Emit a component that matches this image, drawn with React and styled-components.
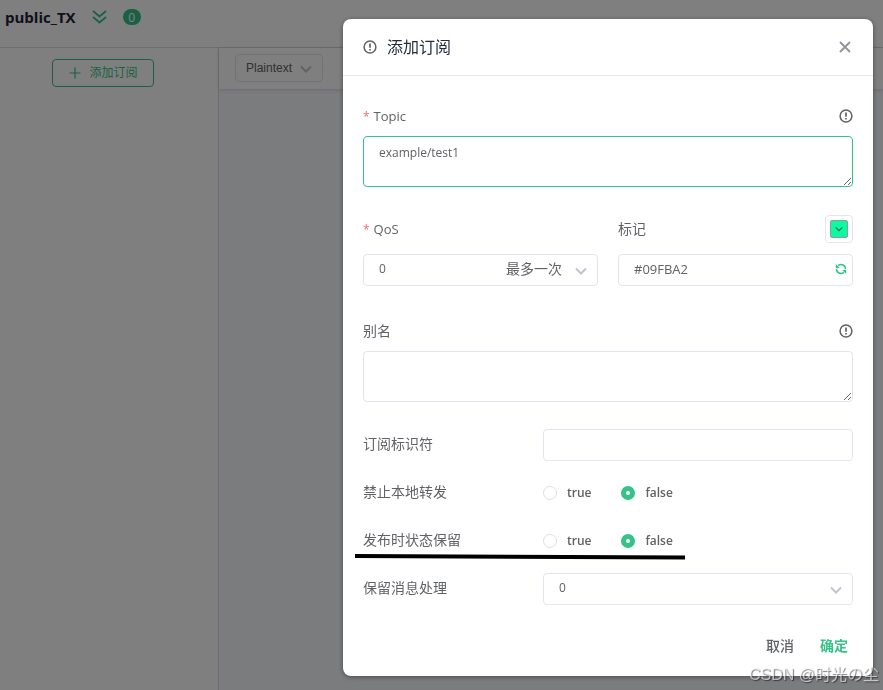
import React, { useState } from 'react'
import styled, { createGlobalStyle } from 'styled-components'

const green = '#34c388'
const border = '#e4e4ef'

const GlobalStyle = createGlobalStyle`
  *, *::before, *::after {
    box-sizing: border-box;
  }

  body {
    margin: 0;
    background: #fff;
    color: #606266;
    font: 13px/20px "Open Sans", "Noto Sans CJK SC", sans-serif;
  }

  button, input, select, textarea {
    font: inherit;
    color: inherit;
  }

  button {
    padding: 0;
    border: none;
    background: none;
    cursor: pointer;
  }
`

const Page = styled.div`
  display: flex;
  flex-direction: column;
  min-height: 100vh;
`

const TopBar = styled.header`
  display: flex;
  align-items: flex-start;
  height: 48px;
  padding: 7px 5px;
  border-bottom: 1px solid #dcdce2;
`

const ClientName = styled.h1`
  margin: 0 16px 0 0;
  color: #1d2236;
  font-size: 15px;
  font-weight: 700;
  line-height: 20px;
`

const Collapse = styled.button`
  display: flex;
  align-items: center;
  height: 20px;
  margin-right: 16px;
  color: ${green};
`

const Count = styled.span`
  min-width: 18px;
  height: 16px;
  margin-top: 2px;
  border-radius: 8px;
  background: ${green};
  color: #fff;
  font-size: 12px;
  line-height: 17px;
  text-align: center;
`

const Columns = styled.div`
  display: flex;
  flex: 1;
`

const Sidebar = styled.aside`
  display: flex;
  flex: 0 0 219px;
  align-items: flex-start;
  justify-content: center;
  padding: 11px 12px 0 0;
  border-right: 1px solid #dcdce2;
`

const NewSubscription = styled.button`
  display: flex;
  align-items: center;
  gap: 8px;
  height: 28px;
  padding: 0 15px 0 16px;
  border: 1px solid ${green};
  border-radius: 4px;
  color: ${green};
  font-size: 12px;
`

const Messages = styled.main`
  flex: 1;
  background: #f7f8fc;
`

const Toolbar = styled.div`
  height: 41px;
  padding: 6px 16px;
  background: #fff;
  box-shadow: 0 1px 4px rgba(0, 0, 0, 0.14);
`

const SelectBox = styled.div`
  position: relative;
  width: ${props => props.$width || '100%'};

  svg {
    position: absolute;
    top: 50%;
    right: 11px;
    margin-top: -5px;
    color: #c0c4cc;
    pointer-events: none;
  }
`

const FormatSelect = styled.select`
  display: block;
  width: 100%;
  height: 28px;
  padding: 0 10px;
  border: 1px solid ${border};
  border-radius: 4px;
  background: #fff;
  appearance: none;
  font: 12px/26px "Liberation Sans", Arial, sans-serif;
`

const Overlay = styled.div`
  position: fixed;
  inset: 0;
  display: flex;
  align-items: flex-start;
  justify-content: flex-end;
  padding: 19px 10px;
  overflow: auto;
  background: rgba(0, 0, 0, 0.5);
`

const Dialog = styled.form`
  width: 100%;
  max-width: 530px;
  border-radius: 8px;
  background: #fff;
  box-shadow: 0 1px 5px rgba(0, 0, 0, 0.4);
`

const DialogHeader = styled.header`
  display: flex;
  align-items: center;
  height: 57px;
  padding: 0 20px;
  border-bottom: 1px solid ${border};
`

const DialogTitle = styled.h2`
  flex: 1;
  margin: 0 0 0 10px;
  color: #262b40;
  font-size: 16px;
  font-weight: 400;
`

const IconButton = styled.button`
  display: flex;
  align-items: center;
  justify-content: center;
  color: ${props => props.$color || '#606266'};
`

const CloseButton = styled(IconButton)`
  width: 16px;
  height: 16px;
`

const DialogBody = styled.div`
  padding: 20px 20px 0;
`

const Field = styled.div`
  flex: 1;
  min-width: 0;
  margin-bottom: ${props => props.$space || 25}px;
`

const FieldPair = styled.div`
  display: flex;
  gap: 20px;
`

const FieldHead = styled.div`
  display: flex;
  align-items: center;
  justify-content: space-between;
  height: ${props => (props.$tall ? 45 : 40)}px;
  padding-bottom: ${props => (props.$tall ? 5 : 0)}px;
`

const Label = styled.label`
  font-size: 14px;
  line-height: 20px;
`

const LatinLabel = styled(Label)`
  font-size: 13px;

  &::before {
    content: '*';
    margin-right: 4px;
    color: #f56c6c;
    font-size: 12px;
  }
`

const TextArea = styled.textarea`
  display: block;
  width: 100%;
  height: 51px;
  padding: 6px 15px;
  border: 1px solid ${border};
  border-radius: 4px;
  outline: none;
  background: #fff;
  font-size: 12px;
  resize: vertical;

  ${props => props.$active && `border-color: ${green};`}
`

const Input = styled.input`
  display: block;
  width: 100%;
  height: 32px;
  padding: 0 15px 2px;
  border: 1px solid ${border};
  border-radius: 4px;
  outline: none;
  background: #fff;
`

const Select = styled(Input)`
  appearance: none;
  font-size: 12px;
`

const SelectHint = styled.span`
  position: absolute;
  top: 5px;
  right: 36px;
  font-size: 14px;
  pointer-events: none;
`

const InputBox = styled.div`
  position: relative;

  button {
    position: absolute;
    top: 9px;
    right: 6px;
  }
`

const ColorPicker = styled.button`
  width: 28px;
  height: 28px;
  padding: 4px;
  border: 1px solid #e6e6e6;
  border-radius: 4px;
`

const Swatch = styled.span`
  display: flex;
  align-items: center;
  justify-content: center;
  height: 18px;
  border: 1px solid #999;
  border-radius: 2px;
  color: #4d5a56;
`

const Row = styled.div`
  position: relative;
  display: flex;
  align-items: center;
  height: 32px;
  margin-top: 16px;

  > :first-child {
    flex: 0 0 180px;
    padding-bottom: 2px;
  }
`

const Properties = styled.div`
  margin-top: 27px;

  > :first-child {
    margin-top: 0;
  }
`

const Radios = styled.div`
  display: flex;
  gap: 30px;
`

const RadioLabel = styled.label`
  display: flex;
  align-items: center;
  gap: 10px;
  font-size: 12px;
  font-weight: 600;
`

const Radio = styled.input`
  width: 14px;
  height: 14px;
  margin: 0;
  border: 1px solid #dcdfe6;
  border-radius: 50%;
  background: #fff;
  appearance: none;

  &:checked {
    border: 5px solid ${green};
  }
`

const Underline = styled.svg`
  position: absolute;
  top: 28px;
  left: -8px;
`

const DialogFooter = styled.footer`
  display: flex;
  justify-content: flex-end;
  gap: 26px;
  padding: 31px 25px 20px;
`

const TextButton = styled.button`
  color: ${props => (props.$primary ? green : '#606266')};
  font-size: 14px;
  font-weight: ${props => (props.$primary ? 700 : 500)};
`

const Watermark = styled.div`
  position: fixed;
  right: 4px;
  bottom: 3px;
  color: rgba(255, 255, 255, 0.6);
  font: 16px/24px "Liberation Sans", "Noto Sans CJK SC", sans-serif;
  text-shadow: 1px 1px 1px rgba(0, 0, 0, 0.5);
`

const Chevron = ({ size = 12, width = 2 }) => (
  <svg width={size} height={size} viewBox="0 0 12 12" fill="none" stroke="currentColor" strokeWidth={width}>
    <path d="M1 3.5l5 5 5-5" />
  </svg>
)

const Warning = () => (
  <svg width="14" height="14" viewBox="0 0 14 14" fill="none" stroke="currentColor">
    <circle cx="7" cy="7" r="5.9" strokeWidth="1.5" />
    <path d="M7 3.5v4.3M7 9v1.5" strokeWidth="1.7" />
  </svg>
)

const Refresh = () => (
  <svg width="12" height="12" viewBox="0 0 12 12" fill="none" stroke="currentColor" strokeWidth="1.6">
    <path d="M3.2 2.6A4.5 4.5 0 0 1 10.5 6.2M8.8 9.4A4.5 4.5 0 0 1 1.5 5.8" />
    <path d="M.8 1v4h4zM11.2 11V7h-4z" fill="currentColor" stroke="none" />
  </svg>
)

const BoolRow = ({ label, name, children }) => (
  <Row role="radiogroup" aria-labelledby={name}>
    <Label as="span" id={name}>{label}</Label>
    <Radios>
      <RadioLabel><Radio type="radio" name={name} value="true" />true</RadioLabel>
      <RadioLabel><Radio type="radio" name={name} value="false" defaultChecked />false</RadioLabel>
    </Radios>
    {children}
  </Row>
)

function SubscriptionDialog() {
  const [color, setColor] = useState('#09FBA2')

  const randomColor = () => {
    const value = Math.floor(Math.random() * 0xffffff)
    setColor(`#${value.toString(16).padStart(6, '0').toUpperCase()}`)
  }

  return (
    <Dialog role="dialog" aria-labelledby="dialog-title" onSubmit={e => e.preventDefault()}>
      <DialogHeader>
        <IconButton type="button"><Warning /></IconButton>
        <DialogTitle id="dialog-title">添加订阅</DialogTitle>
        <CloseButton type="button" $color="#909399">
          <svg width="12" height="12" viewBox="0 0 12 12" stroke="currentColor" strokeWidth="1.8">
            <path d="M1 1l10 10M11 1L1 11" />
          </svg>
        </CloseButton>
      </DialogHeader>
      <DialogBody>
        <Field $space={22}>
          <FieldHead>
            <LatinLabel htmlFor="topic">Topic</LatinLabel>
            <IconButton type="button"><Warning /></IconButton>
          </FieldHead>
          <TextArea id="topic" $active defaultValue="example/test1" />
        </Field>
        <FieldPair>
          <Field>
            <FieldHead $tall>
              <LatinLabel htmlFor="qos">QoS</LatinLabel>
            </FieldHead>
            <SelectBox>
              <Select as="select" id="qos">
                <option>0</option>
                <option>1</option>
                <option>2</option>
              </Select>
              <SelectHint>最多一次</SelectHint>
              <Chevron />
            </SelectBox>
          </Field>
          <Field>
            <FieldHead $tall>
              <Label htmlFor="color">标记</Label>
              <ColorPicker type="button">
                <Swatch style={{ background: color }}><Chevron size={8} width={1.6} /></Swatch>
              </ColorPicker>
            </FieldHead>
            <InputBox>
              <Input id="color" value={color} onChange={e => setColor(e.target.value)} />
              <IconButton type="button" $color={green} onClick={randomColor}><Refresh /></IconButton>
            </InputBox>
          </Field>
        </FieldPair>
        <Field $space={27}>
          <FieldHead>
            <Label htmlFor="alias">别名</Label>
            <IconButton type="button"><Warning /></IconButton>
          </FieldHead>
          <TextArea id="alias" />
        </Field>
        <Properties>
          <Row>
            <Label htmlFor="identifier">订阅标识符</Label>
            <Input id="identifier" />
          </Row>
          <BoolRow label="禁止本地转发" name="no-local" />
          <BoolRow label="发布时状态保留" name="retain-as-published">
            <Underline width="332" height="8" viewBox="0 0 332 8">
              <path d="M0 3l330 1.5" stroke="#000" strokeWidth="4" />
            </Underline>
          </BoolRow>
          <Row>
            <Label htmlFor="retain-handling">保留消息处理</Label>
            <SelectBox>
              <Select as="select" id="retain-handling">
                <option>0</option>
                <option>1</option>
                <option>2</option>
              </Select>
              <Chevron />
            </SelectBox>
          </Row>
        </Properties>
      </DialogBody>
      <DialogFooter>
        <TextButton type="button">取消</TextButton>
        <TextButton type="submit" $primary>确定</TextButton>
      </DialogFooter>
    </Dialog>
  )
}

export default function App() {
  return (
    <>
      <GlobalStyle />
      <Page>
        <TopBar>
          <ClientName>public_TX</ClientName>
          <Collapse>
            <svg width="15" height="14" viewBox="0 0 15 14" fill="none" stroke="currentColor" strokeWidth="1.8">
              <path d="M1 1l6.5 5.5L14 1M1 7l6.5 5.5L14 7" />
            </svg>
          </Collapse>
          <Count>0</Count>
        </TopBar>
        <Columns>
          <Sidebar>
            <NewSubscription>
              <svg width="12" height="12" viewBox="0 0 12 12" stroke="currentColor" strokeWidth="1.2">
                <path d="M6 .5v11M.5 6h11" />
              </svg>
              添加订阅
            </NewSubscription>
          </Sidebar>
          <Messages>
            <Toolbar>
              <SelectBox $width="88px">
                <FormatSelect aria-label="Plaintext">
                  <option>Plaintext</option>
                  <option>JSON</option>
                </FormatSelect>
                <Chevron />
              </SelectBox>
            </Toolbar>
          </Messages>
        </Columns>
      </Page>
      <Overlay>
        <SubscriptionDialog />
      </Overlay>
      <Watermark>CSDN @时光の尘</Watermark>
    </>
  )
}
